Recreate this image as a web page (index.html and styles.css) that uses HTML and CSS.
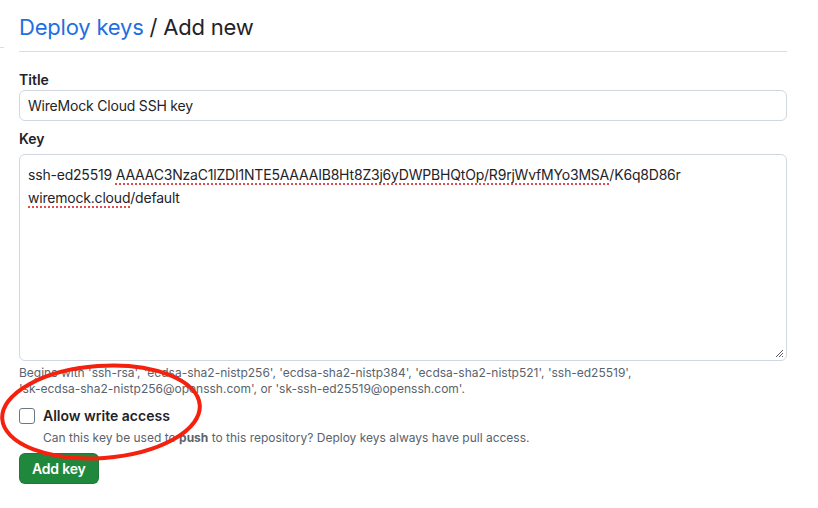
FILE: index.html
```html
<!DOCTYPE html>
<html lang="en">
<head>
    <meta charset="UTF-8">
    <title>Deploy keys / Add new</title>
    <meta name="viewport" content="width=device-width, initial-scale=1.0">
    <link rel="stylesheet" href="styles.css">
</head>
<body>
    <div class="side-line"></div>
    <div class="container">
        <h2 class="page-title"><a href="#" class="crumb">Deploy keys</a> / Add new</h2>

        <form class="form">
            <div class="form-group">
                <label class="form-label">Title</label>
                <div class="input">WireMock Cloud SSH key</div>
            </div>

            <div class="form-group">
                <label class="form-label">Key</label>
                <div class="textarea">
                    ssh-ed25519 <span class="spell">AAAAC3NzaC1lZDI1NTE5AAAAIB8Ht8Z3j6yDWPBHQtOp/R9rjWvfMYo3MSA</span>/K6q8D86r
                    <span class="spell">wiremock.cloud</span>/default
                    <svg class="grip" width="9" height="9" viewBox="0 0 9 9">
                        <path d="M1 8 L8 1 M4 8 L8 4 M7 8 L8 7" stroke="#57606a" stroke-width="1"/>
                    </svg>
                </div>
                <p class="note">Begins with 'ssh-rsa', 'ecdsa-sha2-nistp256', 'ecdsa-sha2-nistp384', 'ecdsa-sha2-nistp521', 'ssh-ed25519',<br>'sk-ecdsa-sha2-nistp256@openssh.com', or 'sk-ssh-ed25519@openssh.com'.</p>
            </div>

            <div class="check-row">
                <span class="checkbox"></span>
                <div>
                    <div class="check-label">Allow write access</div>
                    <p class="check-note">Can this key be used to <strong>push</strong> to this repository? Deploy keys always have pull access.</p>
                </div>
            </div>

            <button type="button" class="btn-primary">Add key</button>
        </form>

        <!-- red annotation circled on the screenshot -->
        <svg class="annotation" width="220" height="112" viewBox="0 0 220 112">
            <ellipse cx="101" cy="56" rx="99" ry="46" fill="none" stroke="#f5210f" stroke-width="4" transform="rotate(-4 101 56)"/>
        </svg>
    </div>
</body>
</html>
```

FILE: styles.css
```css
body {
    font-family: Inter, "Noto Sans", sans-serif;
    color: #1f2328;
    background-color: #ffffff;
    margin: 0;
    padding: 0;
}
.side-line {
    position: absolute;
    left: 0;
    top: 47px;
    width: 4px;
    height: 1px;
    background-color: #d8dee4;
}
.container {
    position: relative;
    width: 768px;
    margin-left: 19px;
    padding-top: 11px;
}
.page-title {
    font-size: 22px;
    font-weight: 400;
    line-height: 32px;
    margin: 0;
    padding-bottom: 8px;
    border-bottom: 1px solid #d8dee4;
    letter-spacing: -0.2px;
}
.crumb {
    color: #1f6fe0;
    text-decoration: none;
}
.form {
    margin-top: 18px;
}
.form-group {
    margin-bottom: 8px;
}
.form-label {
    display: block;
    font-size: 14px;
    font-weight: 600;
    line-height: 20px;
}
.input {
    box-sizing: border-box;
    height: 31px;
    padding: 0 8px;
    font-size: 14px;
    line-height: 29px;
    letter-spacing: -0.2px;
    border: 1px solid #d0d7de;
    border-radius: 6px;
}
.textarea {
    position: relative;
    box-sizing: border-box;
    height: 207px;
    margin-top: 5px;
    padding: 8px 8px;
    font-size: 14px;
    line-height: 23px;
    letter-spacing: -0.2px;
    border: 1px solid #d0d7de;
    border-radius: 6px;
}
.spell {
    text-decoration: underline dotted #e5484d;
    text-decoration-thickness: 2px;
    text-underline-offset: 3px;
}
.grip {
    position: absolute;
    right: 2px;
    bottom: 2px;
}
.note {
    font-size: 12px;
    line-height: 16px;
    color: #59636e;
    margin: 4px 0 0 0;
}
.check-row {
    display: flex;
    gap: 8px;
    margin-top: 9px;
}
.checkbox {
    box-sizing: border-box;
    width: 16px;
    height: 16px;
    margin-top: 2px;
    border: 1px solid #6e7781;
    border-radius: 3px;
    flex-shrink: 0;
}
.check-label {
    font-size: 14px;
    font-weight: 600;
    line-height: 20px;
}
.check-note {
    font-size: 12px;
    line-height: 16px;
    color: #59636e;
    margin: 4px 0 0 0;
}
.btn-primary {
    margin-top: 7px;
    height: 31px;
    padding: 0 12px;
    font-family: inherit;
    font-size: 14px;
    font-weight: 600;
    letter-spacing: -0.2px;
    color: #ffffff;
    background-color: #1f883d;
    border: 1px solid rgba(31, 35, 40, 0.15);
    border-radius: 6px;
}
.annotation {
    position: absolute;
    left: -19px;
    top: 356px;
}
```
